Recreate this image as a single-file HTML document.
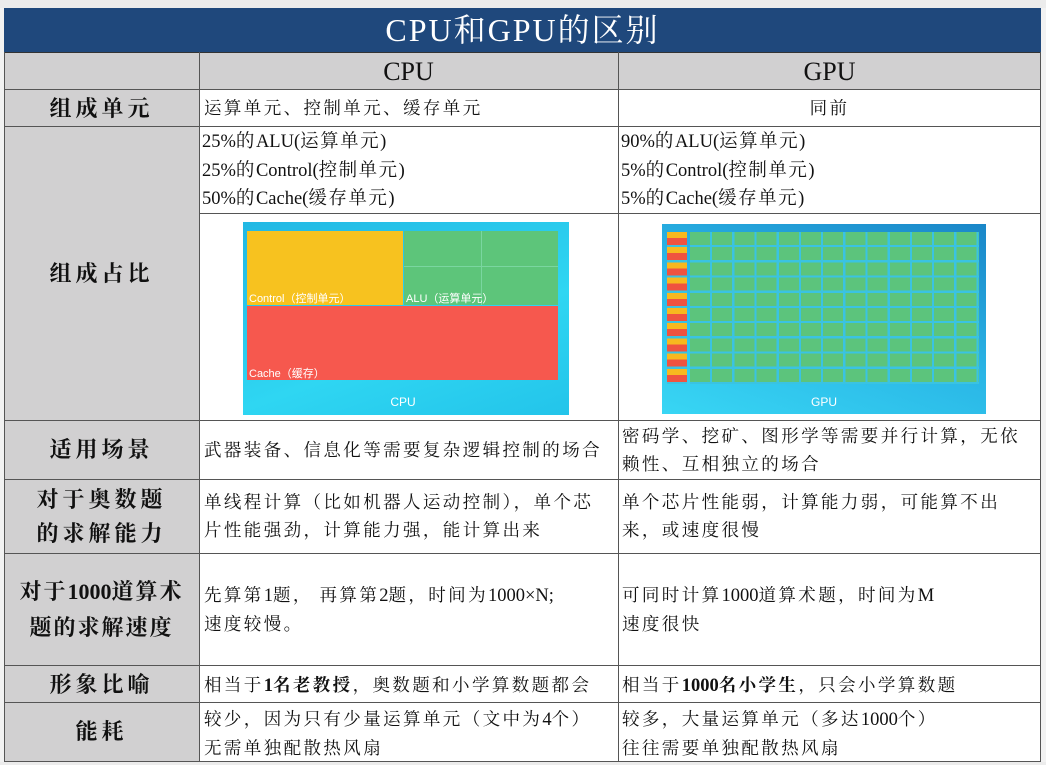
<!DOCTYPE html>
<html><head><meta charset="utf-8"><style>
*{margin:0;padding:0;box-sizing:border-box}
body{width:1046px;height:765px;background:#f2f2f2;position:relative;overflow:hidden;font-family:"Liberation Serif","Noto Serif CJK SC",serif;color:#111}
.a{position:absolute}
.g{background:#d1d0d1}
.w{background:#fff}
.hl{position:absolute;height:1px;background:#555;left:4px;width:1037px}
.vl{position:absolute;width:1px;background:#555}
.lab{position:absolute;left:4px;width:195px;text-align:center;font-weight:bold;font-size:22px;letter-spacing:4px;line-height:34px}
.t{position:absolute;font-size:17.5px;letter-spacing:2.4px;line-height:28px;white-space:nowrap}
.n{letter-spacing:0;font-size:18.5px}
</style></head><body>
<div class="a" style="left:0;top:0;width:1046px;height:8px;background:#ececec"></div>
<div class="a" style="left:4px;top:8px;width:1037px;height:44px;background:#1f487c;color:#fff;text-align:center;font-size:32px;line-height:44px;letter-spacing:2px">CPU和GPU的区别</div>
<div class="a g" style="left:4px;top:52px;width:1037px;height:38px"></div>
<div class="a g" style="left:4px;top:90px;width:195px;height:672px"></div>
<div class="a w" style="left:199px;top:90px;width:842px;height:672px"></div>
<div class="a" style="left:0;top:762px;width:1046px;height:3px;background:#ececec"></div>

<div class="a" style="left:199px;top:52px;width:419px;text-align:center;font-size:26px;line-height:40px">CPU</div>
<div class="a" style="left:618px;top:52px;width:423px;text-align:center;font-size:26px;line-height:40px">GPU</div>

<div class="lab" style="top:92px">组成单元</div>
<div class="t" style="left:204px;top:94px">运算单元、控制单元、缓存单元</div>
<div class="t" style="left:618px;width:423px;text-align:center;top:94px">同前</div>

<div class="lab" style="top:257px">组成占比</div>
<div class="t" style="left:202px;top:128px;letter-spacing:1.5px;line-height:28.5px;font-size:18.5px"><span class="n">25%</span>的<span class="n">ALU(</span>运算单元<span class="n">)</span><br><span class="n">25%</span>的<span class="n">Control(</span>控制单元<span class="n">)</span><br><span class="n">50%</span>的<span class="n">Cache(</span>缓存单元<span class="n">)</span></div>
<div class="t" style="left:621px;top:128px;letter-spacing:1.5px;line-height:28.5px;font-size:18.5px"><span class="n">90%</span>的<span class="n">ALU(</span>运算单元<span class="n">)</span><br><span class="n">5%</span>的<span class="n">Control(</span>控制单元<span class="n">)</span><br><span class="n">5%</span>的<span class="n">Cache(</span>缓存单元<span class="n">)</span></div>
<div class="hl" style="left:199px;width:842px;top:213px"></div>

<!-- CPU image -->
<div class="a" style="left:243px;top:222px;width:326px;height:193px;background:linear-gradient(160deg,#22b8e4,#2fd6f2 60%,#23c4ea)"></div>
<div class="a" style="left:247px;top:231px;width:156px;height:74px;background:#f7c21f"></div>
<div class="a" style="left:404px;top:231px;width:154px;height:74px;background:#5dc57a"></div>
<div class="a" style="left:404px;top:266px;width:154px;height:1px;background:#7ad6a0"></div>
<div class="a" style="left:481px;top:231px;width:1px;height:74px;background:#7ad6a0"></div>
<div class="a" style="left:247px;top:306px;width:311px;height:74px;background:#f6584e"></div>
<div class="a" style="left:249px;top:290px;font-family:'Liberation Sans','Noto Sans CJK SC',sans-serif;font-size:11px;color:#fff">Control（控制单元）</div>
<div class="a" style="left:406px;top:290px;font-family:'Liberation Sans','Noto Sans CJK SC',sans-serif;font-size:11px;color:#fff">ALU（运算单元）</div>
<div class="a" style="left:249px;top:365px;font-family:'Liberation Sans','Noto Sans CJK SC',sans-serif;font-size:11px;color:#fff">Cache（缓存）</div>
<div class="a" style="left:243px;top:395px;width:320px;text-align:center;font-family:'Liberation Sans',sans-serif;font-size:12px;color:#fff">CPU</div>

<!-- GPU image -->
<div class="a" style="left:662px;top:224px;width:324px;height:190px;background:linear-gradient(20deg,#38d6f4,#2ab6e6 50%,#1a86c8)"></div>
<div class="a" style="left:690px;top:232px;width:289px;height:152px;background:repeating-linear-gradient(90deg,#5cc47c 0 20px,#3ac3e2 20px 22.2px),#5cc47c"></div>
<div class="a" style="left:690px;top:232px;width:289px;height:152px;background:repeating-linear-gradient(180deg,transparent 0 13px,#3ac3e2 13px 15.2px)"></div>
<div class="a" style="left:667px;top:232px;width:20px;height:152px;background:repeating-linear-gradient(180deg,#f7b81f 0 6px,#ef5340 6px 13px,#3ac3e2 13px 15.2px)"></div>
<div class="a" style="left:662px;top:395px;width:324px;text-align:center;font-family:'Liberation Sans',sans-serif;font-size:12px;color:#fff">GPU</div>

<div class="lab" style="top:433px">适用场景</div>
<div class="t" style="left:204px;top:436px">武器装备、信息化等需要复杂逻辑控制的场合</div>
<div class="t" style="left:622px;top:422px">密码学、挖矿、图形学等需要并行计算，无依<br>赖性、互相独立的场合</div>

<div class="lab" style="top:483px;line-height:34px">对于奥数题<br>的求解能力</div>
<div class="t" style="left:204px;top:488px">单线程计算（比如机器人运动控制），单个芯<br>片性能强劲，计算能力强，能计算出来</div>
<div class="t" style="left:622px;top:488px">单个芯片性能弱，计算能力弱，可能算不出<br>来，或速度很慢</div>

<div class="lab" style="top:574px;line-height:36px;letter-spacing:2px">对于<span style="letter-spacing:0">1000</span>道算术<br>题的求解速度</div>
<div class="t" style="left:204px;top:581px">先算第<span class="n">1</span>题， 再算第<span class="n">2</span>题，时间为<span class="n">1000×N;</span><br>速度较慢。</div>
<div class="t" style="left:622px;top:581px">可同时计算<span class="n">1000</span>道算术题，时间为<span class="n">M</span><br>速度很快</div>

<div class="lab" style="top:668px">形象比喻</div>
<div class="t" style="left:204px;top:671px">相当于<b><span class="n">1</span>名老教授</b>，奥数题和小学算数题都会</div>
<div class="t" style="left:622px;top:671px">相当于<b><span class="n">1000</span>名小学生</b>，只会小学算数题</div>

<div class="lab" style="top:715px">能耗</div>
<div class="t" style="left:204px;top:705px">较少，因为只有少量运算单元（文中为<span class="n">4</span>个）<br>无需单独配散热风扇</div>
<div class="t" style="left:622px;top:705px">较多，大量运算单元（多达<span class="n">1000</span>个）<br>往往需要单独配散热风扇</div>

<div class="hl" style="top:52px;background:#333"></div>
<div class="hl" style="top:89px"></div>
<div class="hl" style="top:126px"></div>
<div class="hl" style="top:420px"></div>
<div class="hl" style="top:479px"></div>
<div class="hl" style="top:553px"></div>
<div class="hl" style="top:665px"></div>
<div class="hl" style="top:702px"></div>
<div class="hl" style="top:761px"></div>
<div class="vl" style="left:4px;top:52px;height:710px"></div>
<div class="vl" style="left:199px;top:52px;height:710px"></div>
<div class="vl" style="left:618px;top:52px;height:710px"></div>
<div class="vl" style="left:1040px;top:52px;height:710px"></div>
</body></html>
